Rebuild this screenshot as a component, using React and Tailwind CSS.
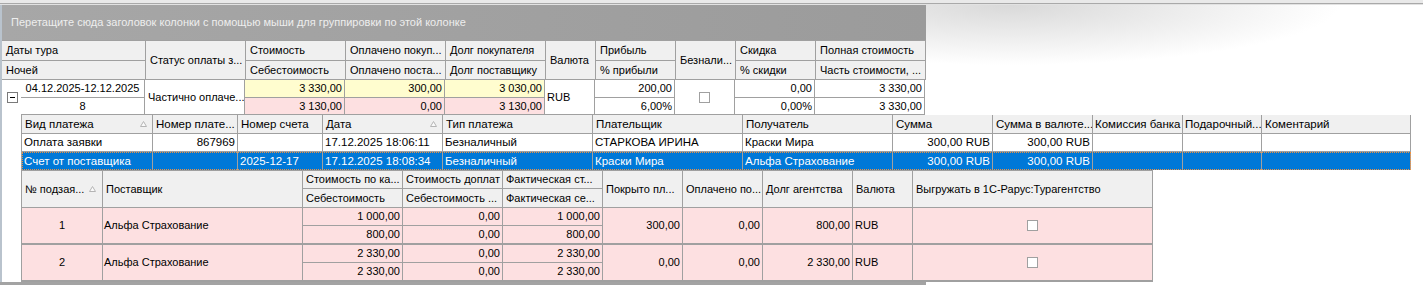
import React from 'react';

const SortArrow = () => (
  <svg width="7" height="6" viewBox="0 0 7 6" className="shrink-0">
    <polygon points="3.5,0.5 6.5,5.5 0.5,5.5" fill="#fafafa" stroke="#b4b4b4" strokeWidth="1" />
  </svg>
);

const CheckBox = () => <span className="block h-[11px] w-[11px] border border-[#a0a0a0] bg-white" />;

const Hd = ({ children, className = '' }) => (
  <div className={`flex items-center overflow-hidden whitespace-nowrap border-r border-b border-[#a0a0a0] bg-[#f0f0f0] ${className}`}>
    {children}
  </div>
);

const Td = ({ children, className = '' }) => (
  <div className={`flex items-center overflow-hidden whitespace-nowrap border-r border-[#a0a0a0] ${className}`}>
    {children}
  </div>
);

const paymentCols = 'grid grid-cols-[131px_85px_85px_120px_150px_150px_150px_100px_100px_90px_79px_149px]';
const subCols = 'grid grid-cols-[81px_200px_100px_100px_100px_80px_80px_90px_60px_240px] grid-rows-[18px_17px]';

const payments = [
  ['Оплата заявки', '867969', '', '17.12.2025 18:06:11', 'Безналичный', 'СТАРКОВА ИРИНА', 'Краски Мира', '300,00 RUB', '300,00 RUB', '', '', ''],
  ['Счет от поставщика', '', '2025-12-17', '17.12.2025 18:08:34', 'Безналичный', 'Краски Мира', 'Альфа Страхование', '300,00 RUB', '300,00 RUB', '', '', ''],
];
const rightCols = [1, 7, 8];

const suppliers = [
  { n: '1', name: 'Альфа Страхование', cost: ['1 000,00', '800,00'], extra: ['0,00', '0,00'], fact: ['1 000,00', '800,00'], covered: '300,00', paid: '0,00', debt: '800,00' },
  { n: '2', name: 'Альфа Страхование', cost: ['2 330,00', '2 330,00'], extra: ['0,00', '0,00'], fact: ['2 330,00', '2 330,00'], covered: '0,00', paid: '0,00', debt: '2 330,00' },
];

export default function App() {
  return (
    <div className="h-[285px] w-[1423px] overflow-hidden bg-white bg-[radial-gradient(ellipse_330px_60px_at_1010px_5px,#d9d9d9,#ffffff)] font-['Liberation_Sans','DejaVu_Sans',sans-serif] text-[11px] leading-[13px] text-black">
      {/* top edge */}
      <div className="h-[3px] bg-[#e9e9e9]" />
      <div className="h-px bg-[#a9a9a9]" />
      <div className="h-px bg-[#e2e2e2]" />

      <div className="flex">
        <div className="w-[2px] shrink-0 bg-[#b9c3cd]" />
        <div className="flex flex-col">
          {/* main grid */}
          <div className="w-[924px]">
            <div className="flex h-[35px] items-center bg-linear-to-r from-[#a7a7a7] to-[#9b9b9b] pl-[9px] text-[11px] text-[#eeeeee]">
              Перетащите сюда заголовок колонки с помощью мыши для группировки по этой колонке
            </div>

            <div className="grid grid-cols-[144px_100px_100px_100px_100px_50px_80px_60px_80px_110px] grid-rows-[20px_19px] border-t border-[#a0a0a0]">
              <Hd className="pl-1">Даты тура</Hd>
              <Hd className="row-span-2 pl-1">Статус оплаты з...</Hd>
              <Hd className="pl-1">Стоимость</Hd>
              <Hd className="pl-1">Оплачено покуп...</Hd>
              <Hd className="pl-1">Долг покупателя</Hd>
              <Hd className="row-span-2 pl-1">Валюта</Hd>
              <Hd className="pl-1">Прибыль</Hd>
              <Hd className="row-span-2 pl-1">Безнали...</Hd>
              <Hd className="pl-1">Скидка</Hd>
              <Hd className="pl-1">Полная стоимость</Hd>
              <Hd className="pl-1">Ночей</Hd>
              <Hd className="pl-1">Себестоимость</Hd>
              <Hd className="pl-1">Оплачено поста...</Hd>
              <Hd className="pl-1">Долг поставщику</Hd>
              <Hd className="pl-1">% прибыли</Hd>
              <Hd className="pl-1">% скидки</Hd>
              <Hd className="pl-1">Часть стоимости, ...</Hd>
            </div>

            <div className="grid grid-cols-[19px_124px_100px_100px_100px_100px_50px_80px_60px_80px_110px] grid-rows-[18px_17px]">
              <div className="row-span-2 flex items-center pl-[5px]">
                <span className="flex h-[11px] w-[11px] items-center justify-center border border-[#7a7a7a] bg-white">
                  <span className="block h-px w-[5px] bg-black" />
                </span>
              </div>
              <Td className="justify-center border-b">04.12.2025-12.12.2025</Td>
              <Td className="row-span-2 border-b pl-[3px]">Частично оплаче...</Td>
              <Td className="justify-end border-b bg-[#fffdcf] pr-[2px]">3 330,00</Td>
              <Td className="justify-end border-b bg-[#fffdcf] pr-[2px]">300,00</Td>
              <Td className="justify-end border-b bg-[#fffdcf] pr-[2px]">3 030,00</Td>
              <Td className="row-span-2 border-b pl-[2px]">RUB</Td>
              <Td className="justify-end border-b pr-[2px]">200,00</Td>
              <Td className="row-span-2 justify-center border-b"><CheckBox /></Td>
              <Td className="justify-end border-b pr-[2px]">0,00</Td>
              <Td className="justify-end border-b pr-[2px]">3 330,00</Td>
              <Td className="justify-center border-b">8</Td>
              <Td className="justify-end border-b bg-[#fde0e1] pr-[2px]">3 130,00</Td>
              <Td className="justify-end border-b bg-[#fde0e1] pr-[2px]">0,00</Td>
              <Td className="justify-end border-b bg-[#fde0e1] pr-[2px]">3 130,00</Td>
              <Td className="justify-end border-b pr-[2px]">6,00%</Td>
              <Td className="justify-end border-b pr-[2px]">0,00%</Td>
              <Td className="justify-end border-b pr-[2px]">3 330,00</Td>
            </div>
          </div>

          {/* payments detail */}
          <div className="ml-[19px] w-[1390px] border-l border-[#a0a0a0] text-[11.5px]">
            <div className={`${paymentCols} h-[19px]`}>
              <Hd className="justify-between pl-[3px] pr-[5px]">Вид платежа<SortArrow /></Hd>
              <Hd className="pl-[3px]">Номер плате...</Hd>
              <Hd className="pl-[3px]">Номер счета</Hd>
              <Hd className="justify-between pl-[3px] pr-[5px]">Дата<SortArrow /></Hd>
              <Hd className="pl-[3px]">Тип платежа</Hd>
              <Hd className="pl-[3px]">Плательщик</Hd>
              <Hd className="pl-[3px]">Получатель</Hd>
              <Hd className="pl-[3px]">Сумма</Hd>
              <Hd className="pl-[3px]">Сумма в валюте...</Hd>
              <Hd className="pl-[2px]">Комиссия банка</Hd>
              <Hd className="pl-[2px]">Подарочный...</Hd>
              <Hd className="pl-[3px]">Коментарий</Hd>
            </div>
            {payments.map((row, r) => (
              <div
                key={r}
                className={
                  r === 1
                    ? `${paymentCols} h-[18px] bg-[#0078d7] text-white outline-1 outline-dotted outline-[#f0913f] -outline-offset-1`
                    : `${paymentCols} h-[18px] bg-white`
                }
              >
                {row.map((v, i) => (
                  <Td
                    key={i}
                    className={`${r === 1 ? 'border-[#5d93c9]' : 'border-b'} ${rightCols.includes(i) ? 'justify-end pr-[2px]' : 'pl-[2px]'}`}
                  >
                    {v}
                  </Td>
                ))}
              </div>
            ))}
          </div>

          {/* supplier sub-requests */}
          <div className="ml-[19px] w-[1132px] border-t border-l border-[#a0a0a0]">
            <div className="grid grid-cols-[81px_200px_100px_100px_100px_80px_80px_90px_60px_240px] grid-rows-[18px_19px]">
              <Hd className="row-span-2 justify-between pl-[3px] pr-[6px]">№ подзая...<SortArrow /></Hd>
              <Hd className="row-span-2 pl-[3px]">Поставщик</Hd>
              <Hd className="pl-[3px]">Стоимость по ка...</Hd>
              <Hd className="pl-[3px]">Стоимость доплат</Hd>
              <Hd className="pl-[3px]">Фактическая ст...</Hd>
              <Hd className="row-span-2 pl-[3px]">Покрыто пл...</Hd>
              <Hd className="row-span-2 pl-[3px]">Оплачено по...</Hd>
              <Hd className="row-span-2 pl-[3px]">Долг агентства</Hd>
              <Hd className="row-span-2 pl-[3px]">Валюта</Hd>
              <Hd className="row-span-2 pl-[3px]">Выгружать в 1С-Рарус:Турагентство</Hd>
              <Hd className="pl-[3px]">Себестоимость</Hd>
              <Hd className="pl-[3px]">Себестоимость ...</Hd>
              <Hd className="pl-[3px]">Фактическая се...</Hd>
            </div>
            {suppliers.map((s) => (
              <div key={s.n} className={`${subCols} border-b-2 border-[#a0a0a0] bg-[#fde0e1]`}>
                <Td className="row-span-2 justify-center">{s.n}</Td>
                <Td className="row-span-2 pl-px">{s.name}</Td>
                <Td className="justify-end border-b pr-[2px]">{s.cost[0]}</Td>
                <Td className="justify-end border-b pr-[2px]">{s.extra[0]}</Td>
                <Td className="justify-end border-b pr-[2px]">{s.fact[0]}</Td>
                <Td className="row-span-2 justify-end pr-[2px]">{s.covered}</Td>
                <Td className="row-span-2 justify-end pr-[2px]">{s.paid}</Td>
                <Td className="row-span-2 justify-end pr-[2px]">{s.debt}</Td>
                <Td className="row-span-2 pl-[2px]">RUB</Td>
                <Td className="row-span-2 justify-center"><CheckBox /></Td>
                <Td className="justify-end pr-[2px]">{s.cost[1]}</Td>
                <Td className="justify-end pr-[2px]">{s.extra[1]}</Td>
                <Td className="justify-end pr-[2px]">{s.fact[1]}</Td>
              </div>
            ))}
          </div>
        </div>
      </div>

      <div className="h-[3px] w-[926px] bg-[#a3a3a3]" />
    </div>
  );
}
